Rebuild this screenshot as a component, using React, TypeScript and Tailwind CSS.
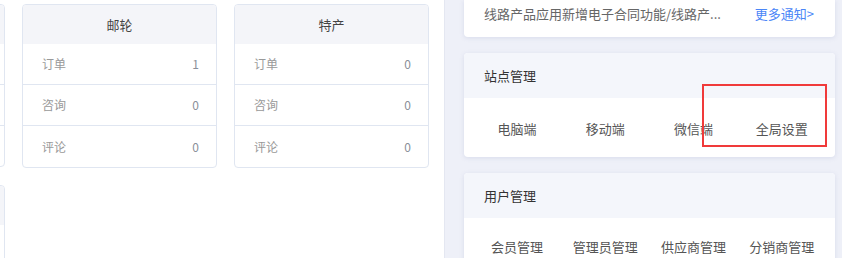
import React from "react";

const font = { fontFamily: '"Noto Sans CJK SC", "Noto Sans", sans-serif' };

function StatCard({ title, rows }: { title: string; rows: [string, string][] }) {
  return (
    <div className="w-[195px] shrink-0 rounded-[4px] border border-[#e0e6f1] bg-white overflow-hidden">
      <div className="h-[39px] bg-[#f4f5f9] flex items-center justify-center text-[13px] text-[#444]">
        {title}
      </div>
      {rows.map(([k, v], i) => (
        <div
          key={k}
          className={`h-[41px] flex items-center justify-between pl-[19px] pr-[17px] text-[12px] text-[#999] ${
            i < rows.length - 1 ? "border-b border-[#e0e6f1]" : ""
          }`}
        >
          <span>{k}</span>
          <span className="text-[#8a8f99]">{v}</span>
        </div>
      ))}
    </div>
  );
}

function PartialCard({ height }: { height: string }) {
  return (
    <div className={`w-[195px] ${height} shrink-0 rounded-[4px] border border-[#e0e6f1] bg-white overflow-hidden`}>
      <div className="h-[39px] bg-[#f4f5f9]" />
      <div className="h-[41px] border-b border-[#e0e6f1]" />
      <div className="h-[41px] border-b border-[#e0e6f1]" />
    </div>
  );
}

function ManageCard({ title, items, bodyCls }: { title: string; items: string[]; bodyCls: string }) {
  return (
    <div className="shrink-0 rounded-[4px] bg-white shadow-[0_1px_4px_rgba(150,160,200,0.25)] overflow-hidden">
      <div className="h-[45px] bg-[#f4f6fb] flex items-center pl-[20px] text-[13px] text-[#333]">
        {title}
      </div>
      <div className={`grid grid-cols-4 px-[9px] ${bodyCls} text-[13px] text-[#555]`}>
        {items.map((t) => (
          <div key={t} className="text-center leading-[20px]">
            {t}
          </div>
        ))}
      </div>
    </div>
  );
}

export default function App() {
  const rows: [string, string][] = [
    ["订单", "0"],
    ["咨询", "0"],
    ["评论", "0"],
  ];
  return (
    <div className="relative w-[842px] h-[258px] overflow-hidden flex bg-[#eef0f8]" style={font}>
      <div className="w-[445px] shrink-0 h-full bg-white border-r border-[#e4e7f1] overflow-hidden pt-[4px]">
        <div className="flex flex-col gap-[17px] ml-[-190px]">
          <div className="flex gap-[17px]">
            <PartialCard height="h-[163px]" />
            <StatCard title="邮轮" rows={[["订单", "1"], ["咨询", "0"], ["评论", "0"]]} />
            <StatCard title="特产" rows={rows} />
          </div>
          <div className="flex gap-[17px]">
            <PartialCard height="h-[163px]" />
          </div>
        </div>
      </div>
      <div className="flex-1 pl-[19px] pr-[7px] flex flex-col gap-[16px] overflow-hidden">
        <div className="shrink-0 h-[37px] rounded-b-[4px] bg-white shadow-[0_1px_4px_rgba(150,160,200,0.25)] flex items-start pt-[4px] pl-[20px] pr-[21px] text-[13px] leading-[20px]">
          <span className="text-[#666] flex-1">线路产品应用新增电子合同功能/线路产...</span>
          <span className="text-[#4a86f7]">更多通知&gt;</span>
        </div>
        <ManageCard title="站点管理" items={["电脑端", "移动端", "微信端", "全局设置"]} bodyCls="pt-[21px] h-[59px]" />
        <ManageCard title="用户管理" items={["会员管理", "管理员管理", "供应商管理", "分销商管理"]} bodyCls="pt-[19px] h-[80px]" />
      </div>
      <div className="absolute left-[702px] top-[84px] w-[125px] h-[63px] border-2 border-[#f03a3a]" />
    </div>
  );
}
